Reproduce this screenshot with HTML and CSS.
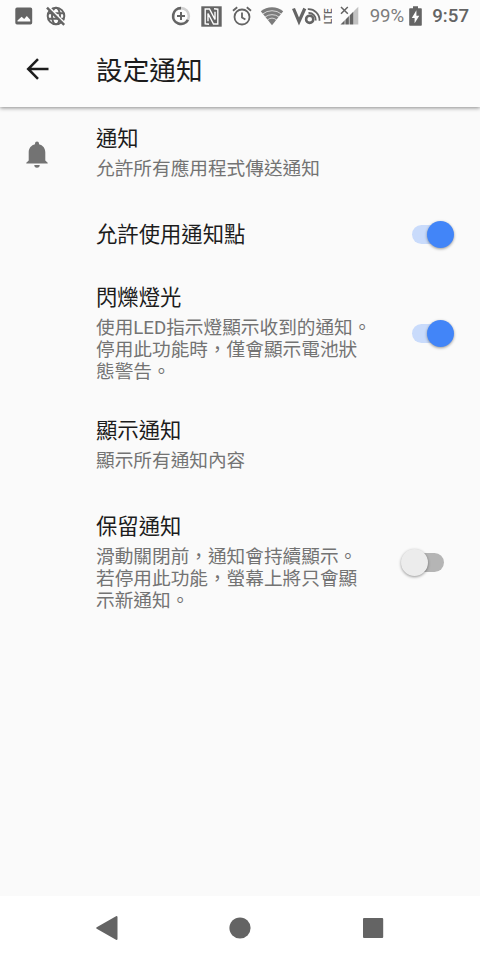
FILE: index.html
```html
<!DOCTYPE html>
<html lang="zh-TW">
<head>
    <meta charset="UTF-8">
    <meta name="viewport" content="width=device-width, initial-scale=1.0">
    <title>設定通知</title>
    <link rel="stylesheet" href="styles.css">
</head>
<body>

    <div class="status-bar">
        <div class="status-left">
            <svg width="18" height="18" viewBox="0 0 18 18">
                <path fill="#646464" fill-rule="evenodd" d="M2 .5h13.500a1.700 1.700 0 0 1 1.700 1.700v13.600a1.700 1.700 0 0 1-1.700 1.700H2A1.700 1.700 0 0 1 .3 15.800V2.200A1.700 1.700 0 0 1 2 .5zM2.500 14.600h12.700v-1.800l-3.400-3.800-2.600 3-2.600-2.300-4.100 3.900z"/>
            </svg>
            <svg class="globe" width="20" height="20" viewBox="0 0 20 20" fill="none" stroke="#646464" stroke-width="2">
                <circle cx="10" cy="10" r="8.300"/>
                <ellipse cx="10" cy="10" rx="4" ry="8.300"/>
                <path d="M2 7.200h16M2 12.800h16"/>
                <path d="M2.400 0.600l17 17" stroke="#fcfcfc" stroke-width="1.800"/>
                <path d="M1 1.600l17.200 17.200" stroke-width="2.400"/>
            </svg>
        </div>
        <div class="status-right">
            <svg class="saver" width="20" height="20" viewBox="0 0 20 20" fill="none" stroke-width="2.600">
                <circle cx="10" cy="10" r="7.900" stroke="#d0d0d0"/>
                <path d="M10 2.100a7.900 7.900 0 1 0 6.900 11.700" stroke="#646464"/>
                <path d="M10 6v8M6 10h8" stroke="#646464" stroke-width="2"/>
            </svg>
            <svg class="nfc" width="21" height="21" viewBox="0 0 21 21">
                <path fill="#646464" d="M.3.300h20.400v20.400H.300z"/>
                <path fill="none" stroke="#fcfcfc" stroke-width="1.400" d="M8 18.300l-3.800-.5V3h4.300l5.500 10.500V5.800M13 2.700l3.800.5V18h-4.300L7 7.500v7.700"/>
            </svg>
            <svg class="alarm" width="20" height="20" viewBox="0 0 20 20" fill="none" stroke="#646464" stroke-width="1.800">
                <circle cx="10" cy="11" r="7.500"/>
                <path d="M10 6.500v5l3.400 2.100M1 4.800l4.200-3.600M19 4.800l-4.200-3.600"/>
            </svg>
            <svg class="wifi" width="24" height="20" viewBox="0 0 24 20">
                <path fill="#7c7c7c" d="M.8 5.300a17.500 17.500 0 0 1 22.400 0L12 19.300z"/>
                <path fill="none" stroke="#fcfcfc" stroke-width=".7" d="M2.500 8.100a15 15 0 0 1 19 0M4.900 11.100a11.500 11.500 0 0 1 14.200 0M7.300 14a7.500 7.500 0 0 1 9.400 0"/>
            </svg>
            <svg class="volte" width="40" height="20" viewBox="0 0 40 20" fill="none" stroke="#646464">
                <path d="M1.500 2.500l5.500 13L12.800 2.500" stroke-width="3.200"/>
                <circle cx="17.700" cy="13.300" r="3.600" stroke-width="2.600"/>
                <path d="M16.500 7a6.800 6.800 0 0 1 7.300 7.500M15.800 3.200a11 11 0 0 1 11.700 11.600" stroke-width="1.800"/>
                <text class="lte" transform="translate(39.500 18.300) rotate(-90)">LTE</text>
            </svg>
            <svg class="signal" width="20" height="20" viewBox="0 0 20 20">
                <path fill="#646464" d="M.5 18.500L13.500 5.500v13z"/>
                <path fill="#c2c2c2" d="M14 18.500V5l4.300-4.300v17.800z"/>
                <path fill="none" stroke="#fcfcfc" stroke-width=".7" d="M5 12v7M9.300 8v11"/>
                <path fill="none" stroke="#646464" stroke-width="1.500" d="M1 1l6.800 6.800M7.800 1L1 7.800"/>
            </svg>
            <span class="percent">99%</span>
            <svg class="battery" width="13" height="20" viewBox="0 0 13 20">
                <path fill="#646464" d="M4 .3h5v2h3a.8.8 0 0 1 .8.800v15.800a.8.8 0 0 1-.8.800H1a.8.8 0 0 1-.8-.8V3.100A.8.800 0 0 1 1 2.300h3z"/>
                <path fill="#fcfcfc" d="M7.400 4.300L2.800 12h2.800v5.300L10.300 9.700H7.400z"/>
            </svg>
            <span class="clock">9:57</span>
        </div>
    </div>

    <header class="app-bar">
        <svg width="24" height="24" viewBox="0 0 24 24" fill="none" stroke="#1c1c1c" stroke-width="2.500">
            <path d="M23.500 12H4M13 2.200L3.200 12l9.800 9.800"/>
        </svg>
        <h1>設定通知</h1>
    </header>

    <main class="settings">
        <div class="item first">
            <div class="icon">
                <svg width="22" height="27" viewBox="0 0 22 27" fill="#737373">
                    <path d="M11 .4a2 2 0 0 1 2 2v.9c3.800.9 6.300 4 6.300 8.100v8l2.400 2.300v.9H.3v-.9l2.400-2.300v-8c0-4.100 2.500-7.200 6.300-8.100v-.9a2 2 0 0 1 2-2z"/>
                    <path d="M8.300 24h5.400a2.700 2.700 0 0 1-5.400 0z"/>
                </svg>
            </div>
            <div class="text">
                <h2>通知</h2>
                <p>允許所有應用程式傳送通知</p>
            </div>
        </div>
        <div class="item single">
            <div class="text">
                <h2>允許使用通知點</h2>
            </div>
            <div class="switch on"><span class="thumb"></span></div>
        </div>
        <div class="item">
            <div class="text">
                <h2>閃爍燈光</h2>
                <p>使用LED指示燈顯示收到的通知。<br>停用此功能時，僅會顯示電池狀<br>態警告。</p>
            </div>
            <div class="switch on"><span class="thumb"></span></div>
        </div>
        <div class="item two-line">
            <div class="text">
                <h2>顯示通知</h2>
                <p>顯示所有通知內容</p>
            </div>
        </div>
        <div class="item">
            <div class="text">
                <h2>保留通知</h2>
                <p>滑動關閉前，通知會持續顯示。<br>若停用此功能，螢幕上將只會顯<br>示新通知。</p>
            </div>
            <div class="switch"><span class="thumb"></span></div>
        </div>
    </main>

    <nav class="nav-bar">
        <svg width="26" height="26" viewBox="0 0 26 26">
            <path fill="#646464" stroke="#646464" stroke-width="2" stroke-linejoin="round" d="M3.200 13L22.500 2v22z"/>
        </svg>
        <svg width="26" height="26" viewBox="0 0 26 26">
            <circle cx="13" cy="13" r="10.600" fill="#646464"/>
        </svg>
        <svg width="26" height="26" viewBox="0 0 26 26">
            <rect x="3" y="3" width="20.200" height="20" rx="1" fill="#646464"/>
        </svg>
    </nav>

</body>
</html>
```
FILE: styles.css
```css
* {
    box-sizing: border-box;
}

body {
    margin: 0;
    height: 960px;
    display: flex;
    flex-direction: column;
    overflow: hidden;
    background-color: #fafafa;
    color: #1c1c1c;
    font-family: Roboto, "Noto Sans CJK TC", sans-serif;
}

h1, h2, p {
    margin: 0;
    font-weight: 400;
    white-space: nowrap;
}

svg {
    display: block;
    flex: none;
}

.status-bar {
    height: 32px;
    padding: 0 11px 0 15px;
    display: flex;
    align-items: center;
    justify-content: space-between;
    background-color: #fcfcfc;
    color: #646464;
    font-size: 18.67px;
    z-index: 2;
}

.status-left, .status-right {
    display: flex;
    align-items: center;
}

.globe {
    margin-left: 13px;
}

.nfc {
    margin-left: 10px;
}

.alarm {
    margin-left: 10px;
}

.wifi {
    margin-left: 8px;
}

.volte {
    margin-left: 8px;
}

.lte {
    font-size: 10px;
    font-weight: 500;
    fill: #646464;
    stroke: none;
}

.signal {
    margin-left: 8px;
}

.percent {
    margin-left: 10px;
    color: #7c7c7c;
}

.battery {
    margin-left: 5px;
}

.clock {
    margin-left: 10px;
    font-weight: 500;
}

.app-bar {
    height: 75px;
    padding: 0 25px 2px;
    display: flex;
    align-items: center;
    background-color: #fcfcfc;
    box-shadow: 0 1px 4px rgba(0, 0, 0, 0.45);
    z-index: 1;
}

.app-bar h1 {
    margin-left: 47px;
    font-size: 26.67px;
}

.settings {
    flex: 1;
    padding-top: 1px;
}

.item {
    display: flex;
    align-items: center;
    padding: 17px 26px 17px 96px;
}

.first {
    padding-left: 0;
    padding-bottom: 22px;
}

.single {
    height: 65px;
    padding-top: 0;
    padding-bottom: 1px;
}

.single h2 {
    padding-top: 1px;
}

.two-line {
    padding-bottom: 24px;
}

.icon {
    width: 96px;
    padding: 3px 0 0 26px;
}

.text {
    flex: 1;
}

.text h2 {
    font-size: 21.33px;
    line-height: 28px;
}

.text p {
    margin-top: 5px;
    color: #737373;
    font-size: 18.67px;
    line-height: 22px;
}

/* switches */
.switch {
    position: relative;
    width: 36px;
    height: 19px;
    margin-right: 10px;
    border-radius: 10px;
    background-color: #b5b5b5;
}

.switch .thumb {
    position: absolute;
    top: -4px;
    left: -7px;
    width: 27px;
    height: 27px;
    border-radius: 50%;
    background-color: #ececec;
    box-shadow: 0 1px 3px rgba(0, 0, 0, 0.4);
}

.switch.on {
    margin-right: 6px;
    background-color: #c9dbfb;
}

.switch.on .thumb {
    left: 15px;
    background-color: #4285f8;
}

.nav-bar {
    height: 64px;
    padding: 0 94px;
    display: flex;
    align-items: center;
    justify-content: space-between;
    background-color: #fff;
}
```
